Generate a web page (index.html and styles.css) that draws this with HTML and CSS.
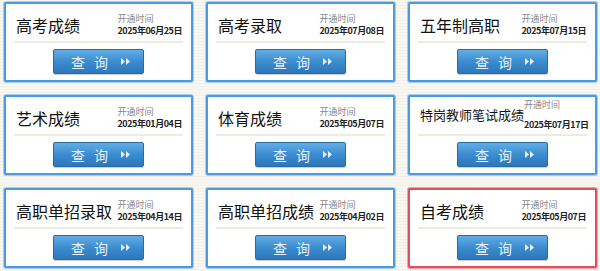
FILE: index.html
```html
<!DOCTYPE html>
<html lang="zh-CN">
<head>
<meta charset="utf-8">
<title>成绩查询</title>
<link rel="stylesheet" href="styles.css">
</head>
<body>
<div class="grid">
  <div class="card">
    <div class="head"><div class="title">高考成绩</div><div class="meta"><div class="label">开通时间</div><div class="date">2025年06月25日</div></div></div>
    <div class="foot"><a class="btn" href="#"><span class="btn-text">查询</span><svg class="arr" viewBox="0 0 9 7" width="9" height="7"><path d="M0 0 L4 3.5 L0 7 Z M5 0 L9 3.5 L5 7 Z" fill="#e6f1fb"/></svg></a></div>
  </div>
  <div class="card">
    <div class="head"><div class="title">高考录取</div><div class="meta"><div class="label">开通时间</div><div class="date">2025年07月08日</div></div></div>
    <div class="foot"><a class="btn" href="#"><span class="btn-text">查询</span><svg class="arr" viewBox="0 0 9 7" width="9" height="7"><path d="M0 0 L4 3.5 L0 7 Z M5 0 L9 3.5 L5 7 Z" fill="#e6f1fb"/></svg></a></div>
  </div>
  <div class="card">
    <div class="head"><div class="title">五年制高职</div><div class="meta"><div class="label">开通时间</div><div class="date">2025年07月15日</div></div></div>
    <div class="foot"><a class="btn" href="#"><span class="btn-text">查询</span><svg class="arr" viewBox="0 0 9 7" width="9" height="7"><path d="M0 0 L4 3.5 L0 7 Z M5 0 L9 3.5 L5 7 Z" fill="#e6f1fb"/></svg></a></div>
  </div>
  <div class="card">
    <div class="head"><div class="title">艺术成绩</div><div class="meta"><div class="label">开通时间</div><div class="date">2025年01月04日</div></div></div>
    <div class="foot"><a class="btn" href="#"><span class="btn-text">查询</span><svg class="arr" viewBox="0 0 9 7" width="9" height="7"><path d="M0 0 L4 3.5 L0 7 Z M5 0 L9 3.5 L5 7 Z" fill="#e6f1fb"/></svg></a></div>
  </div>
  <div class="card">
    <div class="head"><div class="title">体育成绩</div><div class="meta"><div class="label">开通时间</div><div class="date">2025年05月07日</div></div></div>
    <div class="foot"><a class="btn" href="#"><span class="btn-text">查询</span><svg class="arr" viewBox="0 0 9 7" width="9" height="7"><path d="M0 0 L4 3.5 L0 7 Z M5 0 L9 3.5 L5 7 Z" fill="#e6f1fb"/></svg></a></div>
  </div>
  <div class="card">
    <div class="head"><div class="title long">特岗教师笔试成绩</div><div class="meta tall"><div class="label">开通时间</div><div class="date">2025年07月17日</div></div></div>
    <div class="foot"><a class="btn" href="#"><span class="btn-text">查询</span><svg class="arr" viewBox="0 0 9 7" width="9" height="7"><path d="M0 0 L4 3.5 L0 7 Z M5 0 L9 3.5 L5 7 Z" fill="#e6f1fb"/></svg></a></div>
  </div>
  <div class="card">
    <div class="head"><div class="title">高职单招录取</div><div class="meta"><div class="label">开通时间</div><div class="date">2025年04月14日</div></div></div>
    <div class="foot"><a class="btn" href="#"><span class="btn-text">查询</span><svg class="arr" viewBox="0 0 9 7" width="9" height="7"><path d="M0 0 L4 3.5 L0 7 Z M5 0 L9 3.5 L5 7 Z" fill="#e6f1fb"/></svg></a></div>
  </div>
  <div class="card">
    <div class="head"><div class="title">高职单招成绩</div><div class="meta"><div class="label">开通时间</div><div class="date">2025年04月02日</div></div></div>
    <div class="foot"><a class="btn" href="#"><span class="btn-text">查询</span><svg class="arr" viewBox="0 0 9 7" width="9" height="7"><path d="M0 0 L4 3.5 L0 7 Z M5 0 L9 3.5 L5 7 Z" fill="#e6f1fb"/></svg></a></div>
  </div>
  <div class="card active">
    <div class="head"><div class="title">自考成绩</div><div class="meta"><div class="label">开通时间</div><div class="date">2025年05月07日</div></div></div>
    <div class="foot"><a class="btn" href="#"><span class="btn-text">查询</span><svg class="arr" viewBox="0 0 9 7" width="9" height="7"><path d="M0 0 L4 3.5 L0 7 Z M5 0 L9 3.5 L5 7 Z" fill="#e6f1fb"/></svg></a></div>
  </div>
</div>
</body>
</html>
```
FILE: styles.css
```css
* { box-sizing: border-box; }
html, body { margin: 0; padding: 0; }
body {
  width: 600px;
  height: 271px;
  overflow: hidden;
  font-family: "Noto Sans CJK SC", "Noto Sans", sans-serif;
  background: repeating-linear-gradient(180deg, #f8f7f2 0px, #f8f7f2 2px, #f2f0e8 2px, #f2f0e8 3px);
}
.grid {
  display: grid;
  grid-template-columns: 189px 189px 189px;
  grid-auto-rows: 80px;
  column-gap: 13px;
  row-gap: 13px;
  padding: 2px 0 0 4px;
}
.card {
  background: #fff;
  border: 2px solid #4a9be2;
  box-shadow: 0 0 0 1px #a8cdf0;
  border-radius: 2px;
  padding: 0 8px;
  display: flex;
  flex-direction: column;
}
.card.active {
  border-color: #e0505c;
  box-shadow: 0 0 0 1px #f0a4aa;
}
.head {
  height: 39px;
  padding-top: 4px;
  display: flex;
  align-items: center;
  border-bottom: 2px solid #eeebe0;
}
.title {
  font-size: 16px;
  color: #111;
  line-height: 1;
  padding-left: 2px;
  white-space: nowrap;
}
.title.long {
  font-size: 13px;
  margin-top: -6px;
}
.meta {
  margin-left: auto;
  padding-right: 1px;
  display: flex;
  flex-direction: column;
  gap: 2px;
}
.meta.tall {
  gap: 10px;
  margin-top: -6px;
}
.label {
  font-size: 9px;
  line-height: 10px;
  color: #888;
}
.date {
  font-size: 9px;
  line-height: 10px;
  font-weight: bold;
  color: #222;
  letter-spacing: -0.45px;
  white-space: nowrap;
}
.foot {
  display: flex;
  justify-content: center;
  padding-top: 6px;
}
.btn {
  width: 91px;
  height: 25px;
  display: flex;
  align-items: center;
  justify-content: center;
  padding-left: 4px;
  gap: 4px;
  text-decoration: none;
  border: 1px solid #2b6aa6;
  border-radius: 2px;
  background: linear-gradient(180deg, #62ade4 0%, #3c8cd0 50%, #2c77bc 100%);
  box-shadow: 0 1px 1px rgba(0,0,0,0.2);
}
.btn-text {
  font-size: 14px;
  line-height: 1;
  color: #e6f1fb;
  letter-spacing: 9px;
  white-space: nowrap;
}
.arr { display: block; }
```
